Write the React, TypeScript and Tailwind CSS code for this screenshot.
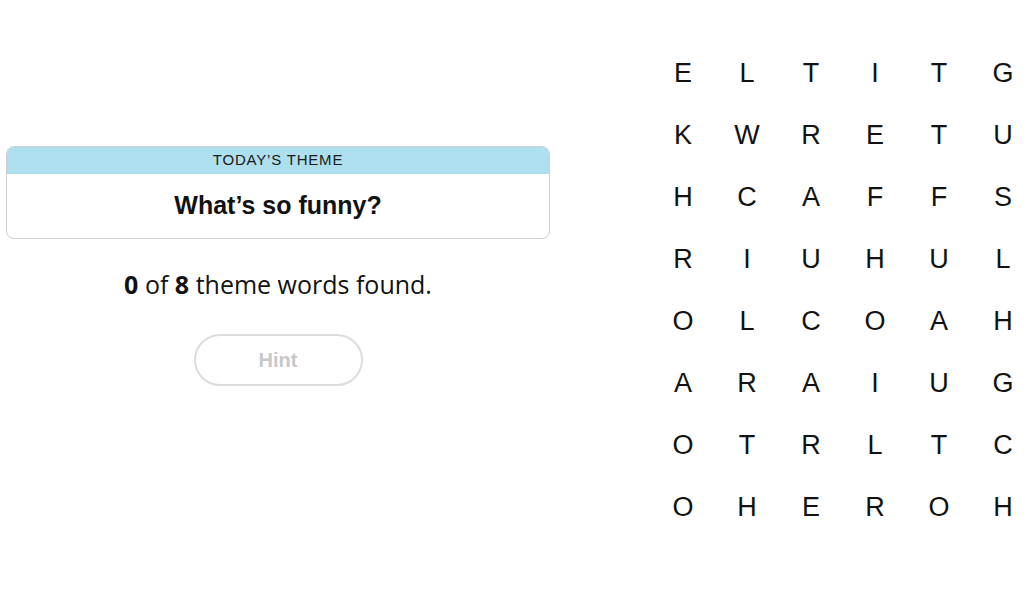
import React from "react";

const rows = [
  "ELTITG",
  "KWRETU",
  "HCAFFS",
  "RIUHUL",
  "OLCOAH",
  "ARAIUG",
  "OTRLTC",
  "OHEROH",
];

export default function App() {
  return (
    <div
      className="w-[1024px] h-[597px] overflow-hidden bg-white flex text-[#121212]"
      style={{ fontFamily: '"Liberation Sans", Arial, sans-serif' }}
    >
      <div className="w-[651px] shrink-0 pt-[146px] pl-[6px]">
        <div className="w-[544px] flex flex-col items-center">
          <div className="w-full rounded-[8px] border border-[#cfcfcf] overflow-hidden">
            <div className="h-[27px] bg-[#aedfee] flex items-center justify-center text-[15px] tracking-[0.8px] text-[#1a1a1a]">
              TODAY’S THEME
            </div>
            <div className="h-[64px] flex items-center justify-center text-[25px] font-bold">
              What’s so funny?
            </div>
          </div>
          <div className="mt-[28px] text-[25px] leading-[34px] font-['Open_Sans',sans-serif]">
            <span className="font-bold">0</span> of <span className="font-bold">8</span> theme words found.
          </div>
          <button className="mt-[33px] w-[169px] h-[52px] rounded-full border-2 border-[#dcdcdc] text-[20px] font-bold text-[#c8c8c8] bg-white">
            Hint
          </button>
        </div>
      </div>
      <div className="pt-[42px] shrink-0">
        <div className="grid grid-cols-[repeat(6,64px)] auto-rows-[62px]">
          {rows.flatMap((r, i) =>
            r.split("").map((c, j) => (
              <div
                key={`${i}-${j}`}
                className="flex items-center justify-center text-[27px] text-[#121212]"
              >
                {c}
              </div>
            ))
          )}
        </div>
      </div>
    </div>
  );
}
